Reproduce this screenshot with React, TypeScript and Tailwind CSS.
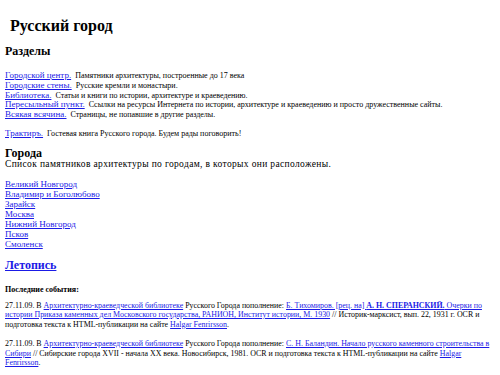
import React from "react";

const A = ({ children }: { children: React.ReactNode }) => (
  <a href="#" className="text-[#1a1ae6] underline underline-offset-1">
    {children}
  </a>
);

const Section = ({ link, text }: { link: string; text: string }) => (
  <div className="h-[9.75px] leading-[9.75px] whitespace-nowrap">
    <span className="text-[9px]"><A>{link}</A></span>{" "}
    <span className="text-[8px]">{text}</span>
  </div>
);

const cities = [
  "Великий Новгород",
  "Владимир и Боголюбово",
  "Зарайск",
  "Москва",
  "Нижний Новгород",
  "Псков",
  "Смоленск",
];

export default function App() {
  return (
    <div className="w-[500px] h-[375px] overflow-hidden bg-white text-black px-[5px] font-['Liberation_Serif','Times_New_Roman',serif]">
      <h1 className="text-[16px] leading-[18px] font-bold pl-[5px] pt-[17px]">Русский город</h1>
      <h2 className="text-[12px] leading-[14px] font-bold mt-[8.5px]">Разделы</h2>
      <div className="mt-[10.5px]">
        <Section link="Городской центр." text="Памятники архитектуры, построенные до 17 века" />
        <Section link="Городские стены." text="Русские кремли и монастыри." />
        <Section link="Библиотека." text="Статьи и книги по истории, архитектуре и краеведению." />
        <Section link="Пересыльный пункт." text="Ссылки на ресурсы Интернета по истории, архитектуре и краеведению и просто дружественные сайты." />
        <Section link="Всякая всячина." text="Страницы, не попавшие в другие разделы." />
      </div>
      <div className="mt-[9.5px]">
        <Section link="Трактиръ." text="Гостевая книга Русского города. Будем рады поговорить!" />
      </div>
      <h2 className="text-[12px] leading-[12px] font-bold mt-[10.5px]">Города</h2>
      <div className="text-[9.5px] tracking-[0.35px] leading-[10px] h-[10px] whitespace-nowrap">
        Список памятников архитектуры по городам, в которых они расположены.
      </div>
      <div className="mt-[10px] flex flex-col items-start text-[9px] leading-[10px]">
        {cities.map((c) => (
          <div key={c} className="h-[10px]"><A>{c}</A></div>
        ))}
      </div>
      <h2 className="text-[12px] leading-[14px] font-bold mt-[9px]"><A>Летопись</A></h2>
      <div className="text-[8px] leading-[10px] font-bold mt-[13px]">Последние события:</div>
      <p className="text-[7.92px] leading-[9.5px] mt-[6px] whitespace-nowrap">
        27.11.09. В <A>Архитектурно-краеведческой библиотеке</A> Русского Города пополнение:{" "}
        <A>
          Б. Тихомиров. [рец. на] <b>А. Н. СПЕРАНСКИЙ.</b> Очерки по
          <br />
          истории Приказа каменных дел Московского государства, РАНИОН, Институт истории, М. 1930
        </A>{" "}
        // Историк-марксист, вып. 22, 1931 г. OCR и
        <br />
        подготовка текста к HTML-публикации на сайте <A>Halgar Fenrirsson</A>.
      </p>
      <p className="text-[7.92px] leading-[9.5px] mt-[10px] whitespace-nowrap">
        27.11.09. В <A>Архитектурно-краеведческой библиотеке</A> Русского Города пополнение:{" "}
        <A>
          С. Н. Баландин. Начало русского каменного строительства в
          <br />
          Сибири
        </A>{" "}
        // Сибирские города XVII - начала XX века. Новосибирск, 1981. OCR и подготовка текста к HTML-публикации на сайте{" "}
        <A>
          Halgar
          <br />
          Fenrirsson
        </A>
        .
      </p>
    </div>
  );
}
